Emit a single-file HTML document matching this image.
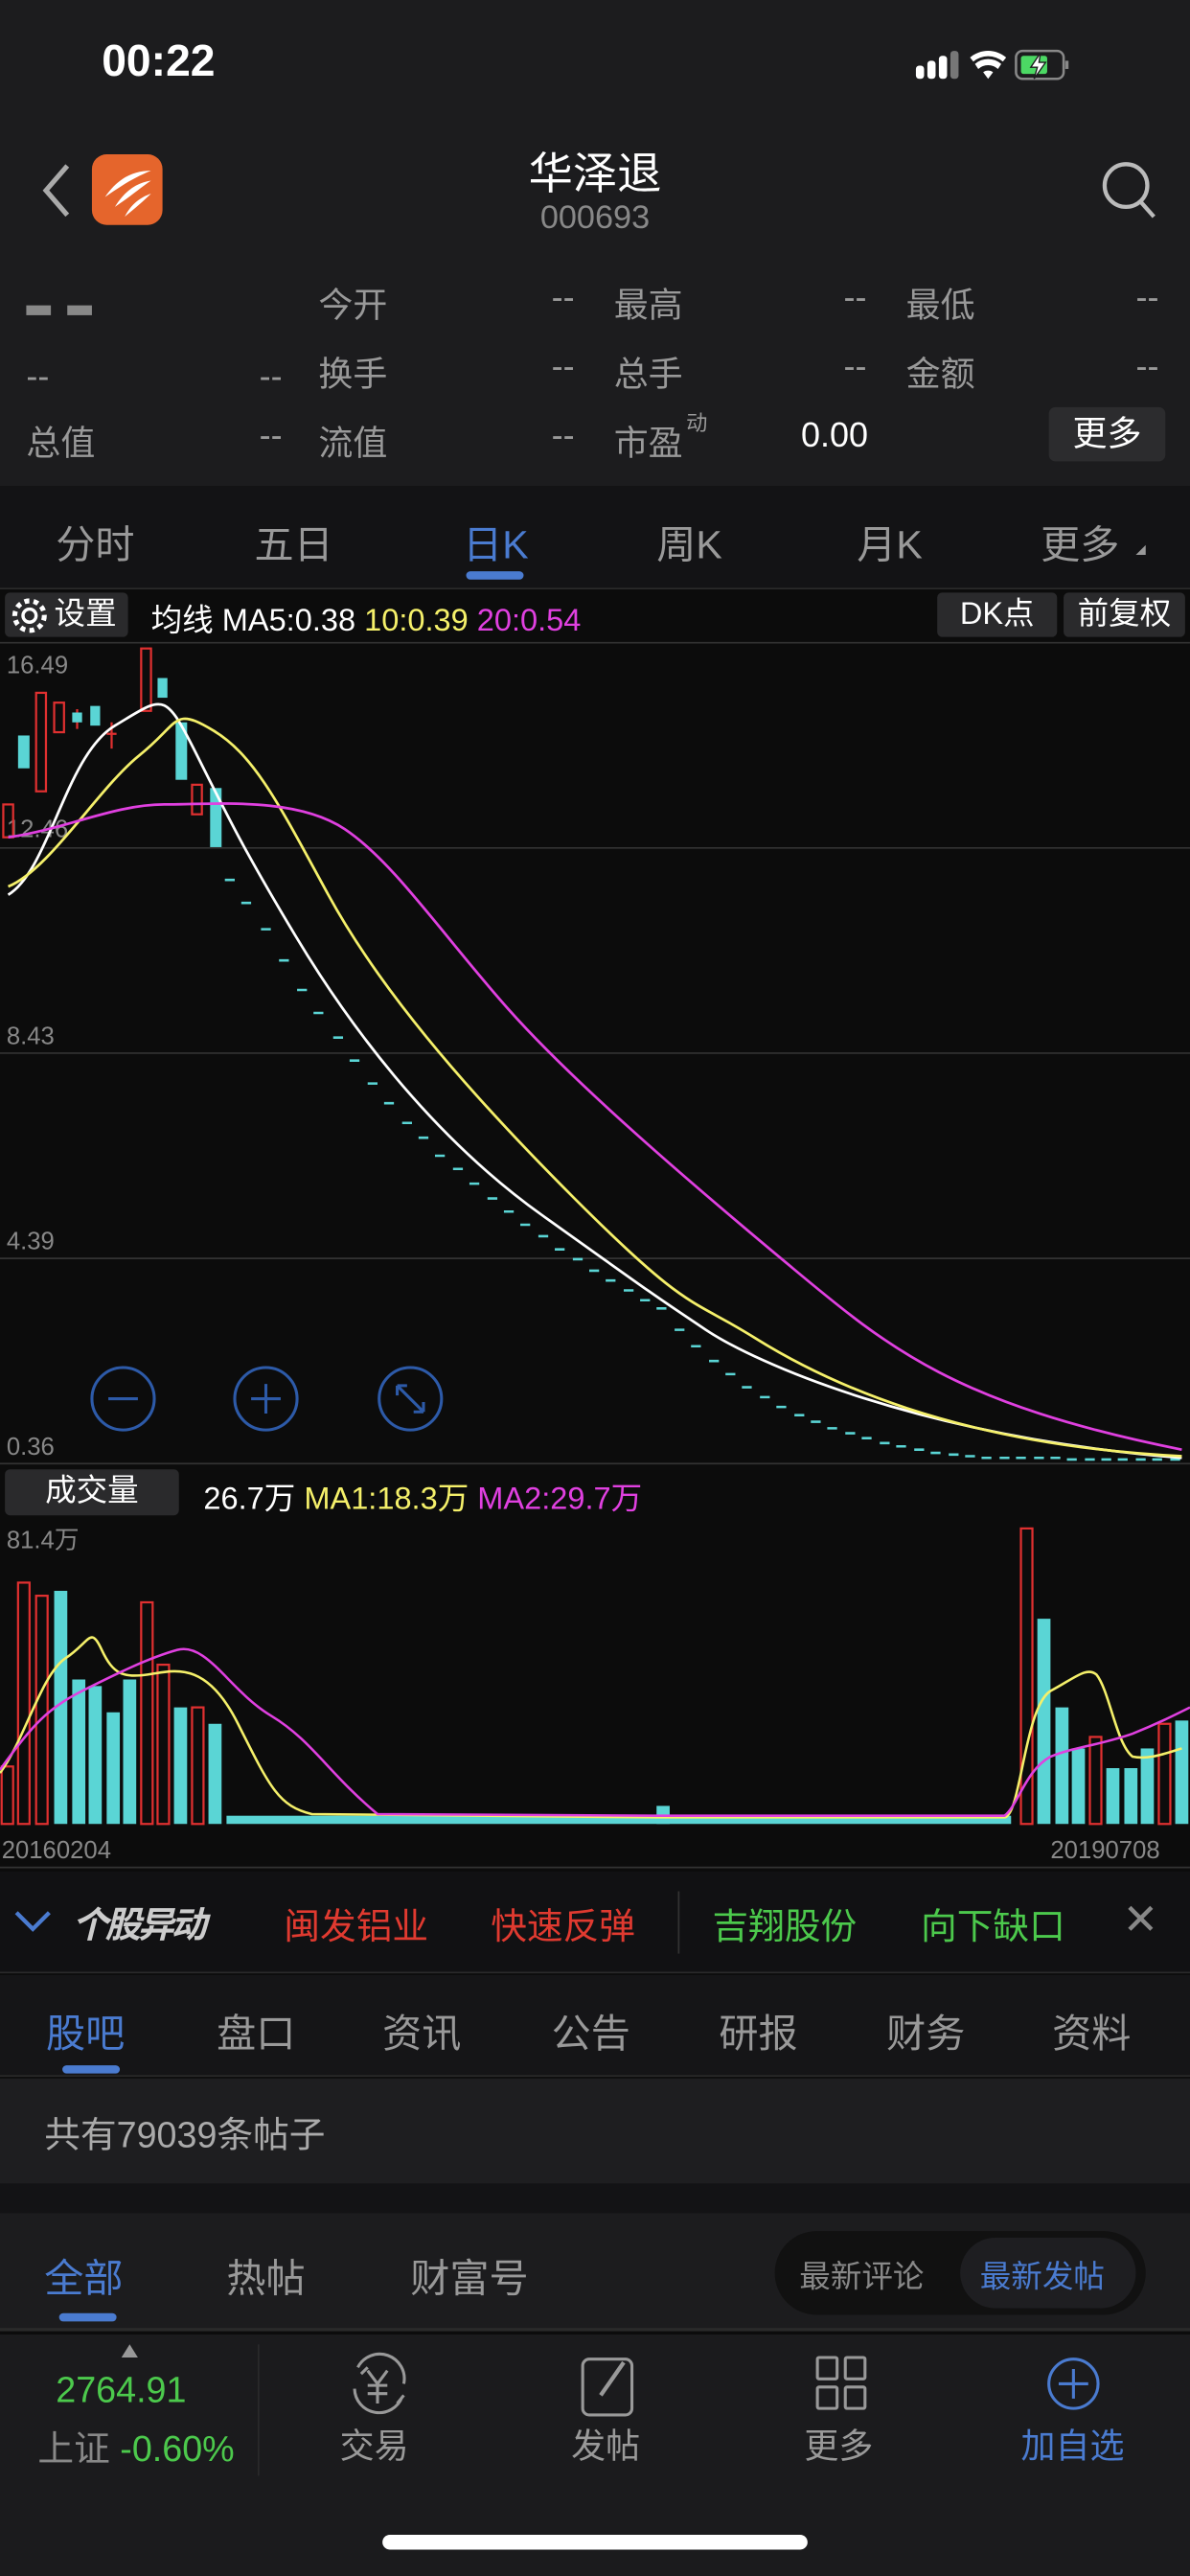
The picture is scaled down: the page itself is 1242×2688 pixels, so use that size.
<!DOCTYPE html>
<html><head><meta charset="utf-8">
<style>
*{margin:0;padding:0;box-sizing:border-box}
html,body{width:1242px;height:2688px;overflow:hidden;background:#1b1b1d}
#w{width:725px;height:1569px;transform:scale(1.71310);transform-origin:0 0;position:relative;font-family:"Liberation Sans","Noto Sans CJK SC",sans-serif;color:#999}
.a{position:absolute;white-space:nowrap}
</style></head><body><div id="w">
<div class="a" style="left:0;top:0;width:725px;height:296px;background:#1c1c1e"></div>
<div class="a" style="left:62px;top:22px;font-size:27px;color:#fff;font-weight:bold">00:22</div>
<svg class="a" style="left:556px;top:28px" width="135" height="24">
<g fill="#fff"><rect x="2" y="12" width="5" height="8" rx="2"/><rect x="9" y="9" width="5" height="11" rx="2"/><rect x="16" y="6" width="5" height="14" rx="2"/><rect x="23" y="3" width="5" height="17" rx="2" fill="#777"/>
<path d="M46 20l-3-4a5 5 0 0 1 6 0z"/><path d="M38 11a12 12 0 0 1 16 0l-2 3a9 9 0 0 0-12 0z"/><path d="M35 7a17 17 0 0 1 22 0l-2 2.5a14 14 0 0 0-18 0z"/></g>
<rect x="63" y="3" width="29" height="17" rx="4" fill="none" stroke="#888" stroke-width="1.5"/><rect x="66" y="6" width="16" height="11" rx="1.5" fill="#4cd964"/><rect x="93" y="9" width="2" height="5" fill="#888"/><path d="M78 4l-6 9h4l-2 7 7-10h-4z" fill="#fff" stroke="#1c1c1e" stroke-width=".8"/></svg>
<svg class="a" style="left:22px;top:98px" width="24" height="36"><path d="M19 3L6 18l13 15" stroke="#aaa" stroke-width="3" fill="none"/></svg>
<div class="a" style="left:56px;top:94px;width:43px;height:43px;border-radius:9px;background:#e5652c"></div>
<svg class="a" style="left:56px;top:94px" width="43" height="43"><g fill="#fff"><path d="M8 26c8-12 18-16 28-16-10 4-18 9-28 16z"/><path d="M14 32c6-10 14-15 22-16-6 4-13 10-22 16z"/><path d="M20 38c4-8 10-12 16-14-4 4-10 9-16 14z"/></g></svg>
<div class="a" style="left:0;width:725px;top:84px;text-align:center;font-size:27px;color:#fff">华泽退</div>
<div class="a" style="left:0;width:725px;top:122px;text-align:center;font-size:20px;color:#888">000693</div>
<svg class="a" style="left:668px;top:96px" width="40" height="40"><circle cx="18" cy="17" r="13" stroke="#bbb" stroke-width="2.5" fill="none"/><path d="M27 27l8 9" stroke="#bbb" stroke-width="2.5"/></svg>
<div class="a" style="left:16px;top:186px;width:40px;height:6px;border-left:15px solid #888;border-right:15px solid #888"></div>
<div style="font-size:21px">
<div class="a" style="left:194px;top:170px">今开</div><div class="a" style="left:336px;top:170px">--</div>
<div class="a" style="left:374px;top:170px">最高</div><div class="a" style="left:514px;top:170px">--</div>
<div class="a" style="left:552px;top:170px">最低</div><div class="a" style="left:692px;top:170px">--</div>
<div class="a" style="left:16px;top:218px">--</div><div class="a" style="left:158px;top:218px">--</div>
<div class="a" style="left:194px;top:212px">换手</div><div class="a" style="left:336px;top:212px">--</div>
<div class="a" style="left:374px;top:212px">总手</div><div class="a" style="left:514px;top:212px">--</div>
<div class="a" style="left:552px;top:212px">金额</div><div class="a" style="left:692px;top:212px">--</div>
<div class="a" style="left:16px;top:254px">总值</div><div class="a" style="left:158px;top:254px">--</div>
<div class="a" style="left:194px;top:254px">流值</div><div class="a" style="left:336px;top:254px">--</div>
<div class="a" style="left:374px;top:254px">市盈</div><div class="a" style="left:418px;top:247px;font-size:13px">动</div>
<div class="a" style="left:488px;top:254px;color:#fff">0.00</div>
<div class="a" style="left:639px;top:248px;width:71px;height:33px;background:#2c2c2e;border-radius:4px;color:#fff;text-align:center;line-height:33px">更多</div>
</div>
<div class="a" style="left:0;top:296px;width:725px;height:62px;background:#131315;font-size:24px">
<div class="a" style="left:34px;top:16px">分时</div><div class="a" style="left:155px;top:16px">五日</div>
<div class="a" style="left:282px;top:16px;color:#4a7bd0">日K</div><div class="a" style="left:400px;top:16px">周K</div>
<div class="a" style="left:522px;top:16px">月K</div><div class="a" style="left:634px;top:16px">更多</div>
<div class="a" style="left:692px;top:36px;border-left:6px solid transparent;border-bottom:6px solid #999"></div>
<div class="a" style="left:284px;top:52px;width:35px;height:5px;border-radius:3px;background:#4a7bd0"></div></div>
<div class="a" style="left:0;top:358px;width:725px;height:1140px;background:#0c0c0c;border-top:1px solid #2a2a2a"></div>
<div class="a" style="left:3px;top:361px;width:75px;height:27px;background:#2a2a2c;border-radius:3px;color:#fff;font-size:19px;line-height:27px;padding-left:30px">设置</div>
<svg class="a" style="left:6px;top:363px" width="24" height="24"><circle cx="12" cy="12" r="4" fill="none" stroke="#fff" stroke-width="2"/><circle cx="12" cy="12" r="9" fill="none" stroke="#fff" stroke-width="3" stroke-dasharray="3 2.6"/></svg>
<div class="a" style="left:92px;top:363px;font-size:19px;color:#fff">均线 MA5:0.38 <span style="color:#f5f06a">10:0.39</span> <span style="color:#e040e0">20:0.54</span></div>
<div class="a" style="left:571px;top:361px;width:73px;height:27px;background:#2a2a2c;border-radius:3px;color:#fff;font-size:19px;line-height:27px;text-align:center">DK点</div>
<div class="a" style="left:648px;top:361px;width:74px;height:27px;background:#2a2a2c;border-radius:3px;color:#fff;font-size:19px;line-height:27px;text-align:center">前复权</div>
<svg class="a" style="left:0;top:0" width="725" height="1140">
<g stroke="#333" stroke-width="1"><path d="M0 391.5H725M0 516.5H725M0 641.5H725M0 766.5H725M0 891.5H725M0 1137.5H725"/></g>
<g fill="#888" font-size="15" font-family="Liberation Sans"><text x="4" y="410">16.49</text><text x="4" y="510">12.46</text><text x="4" y="636">8.43</text><text x="4" y="761">4.39</text><text x="4" y="886">0.36</text><text x="4" y="943">81.4万</text><text x="1" y="1132">20160204</text><text x="640" y="1132">20190708</text></g>
<g stroke="#e03030" fill="none" stroke-width="1.3"><rect x="2" y="490" width="6" height="20"/><rect x="22" y="422" width="6" height="60"/><rect x="33" y="428" width="6" height="18"/><rect x="86" y="395" width="6" height="38"/><rect x="117" y="478" width="6" height="18"/><path d="M68 440v16M47 432v12M65 447h6"/></g>
<g fill="#5ad5d5"><rect x="11" y="448" width="7" height="20"/><rect x="44" y="434" width="6" height="6"/><rect x="55" y="430" width="6" height="12"/><rect x="96" y="413" width="6" height="12"/><rect x="107" y="440" width="7" height="35"/><rect x="128" y="480" width="7" height="36"/>
<path d="M137 536h6M147 550h6M159 566h6M170 585h6M181 603h6M191 617h6M203 632h6M213 646h6M224 660h6M234 672h6M245 684h6M255 693h6M265 704h6M276 712h6M286 721h6M297 730h6M307 738h6M317 746h6M328 753h6M338 761h6M349 767h6M359 774h6M369 780h6M380 786h6M390 792h6M400 797h6M411 810h6M421 820h6M432 829h6M442 837h6M452 845h6M463 851h6M473 857h6M484 862h6M494 866h6M504 870h6M515 873h6M525 876h6M536 879h6M546 881h6M557 883h6M567 885h6M578 886h6M588 887h6M598 888h6M609 888h6M619 888h6M630 888h6M640 888h6M650 889h6M661 889h6M671 889h6M681 889h6M692 889h6M702 889h6M713 889h6" stroke="#5ad5d5" stroke-width="1.5"/></g>
<path d="M5 545C30 530 40 460 70 442S100 420 120 460 150 520 180 570 260 690 330 740 400 790 430 810 560 875 720 888" stroke="#fff" stroke-width="1.6" fill="none"/>
<path d="M5 540C30 530 60 480 85 460S105 430 130 445 170 490 200 545 280 660 350 730 420 790 460 815 580 880 720 887" stroke="#f5f06a" stroke-width="1.6" fill="none"/>
<path d="M5 510C40 505 70 490 100 490S180 485 210 505 270 570 310 615 420 720 480 770 580 855 720 883" stroke="#e040e0" stroke-width="1.6" fill="none"/>
<g stroke="#2d5aa8" stroke-width="1.8" fill="none"><circle cx="75" cy="852" r="19"/><path d="M66 852h18"/><circle cx="162" cy="852" r="19"/><path d="M153 852h18M162 843v18"/><circle cx="250" cy="852" r="19"/><path d="M242 844l16 16M242 844v6M242 844h6M258 860v-6M258 860h-6"/></g>
<g stroke="#e03030" fill="none" stroke-width="1.3"><rect x="1" y="1076" width="7" height="35"/><rect x="11" y="964" width="7" height="147"/><rect x="22" y="972" width="7" height="139"/><rect x="86" y="976" width="7" height="135"/><rect x="117" y="1040" width="7" height="71"/><rect x="96" y="1014" width="7" height="97"/><rect x="622" y="931" width="7" height="180"/><rect x="664" y="1058" width="7" height="53"/><rect x="706" y="1050" width="7" height="61"/></g>
<g fill="#5ad5d5"><rect x="33" y="969" width="8" height="142"/><rect x="44" y="1023" width="8" height="88"/><rect x="54" y="1027" width="8" height="84"/><rect x="65" y="1043" width="8" height="68"/><rect x="75" y="1023" width="8" height="88"/><rect x="106" y="1040" width="8" height="71"/><rect x="127" y="1050" width="8" height="61"/><rect x="632" y="986" width="8" height="125"/><rect x="643" y="1040" width="8" height="71"/><rect x="653" y="1065" width="8" height="46"/><rect x="674" y="1077" width="8" height="34"/><rect x="685" y="1077" width="8" height="34"/><rect x="695" y="1065" width="8" height="46"/><rect x="716" y="1048" width="8" height="63"/>
<rect x="138" y="1106" width="478" height="5"/><rect x="400" y="1100" width="8" height="11"/></g>
<path d="M0 1080C15 1060 25 1020 40 1010S55 990 62 1005 75 1022 90 1020 125 1010 145 1050 170 1100 190 1105L400 1107L612 1107C622 1106 624 1040 640 1030C655 1022 662 1015 668 1020C676 1030 680 1062 690 1070C700 1072 710 1068 720 1065" stroke="#f5f06a" stroke-width="1.5" fill="none"/>
<path d="M0 1078C20 1050 30 1040 50 1030S90 1010 108 1005 140 1030 165 1045 200 1080 230 1105L400 1106L612 1106C620 1100 625 1078 640 1070C655 1064 670 1063 690 1056C705 1050 715 1045 725 1040" stroke="#e040e0" stroke-width="1.5" fill="none"/>
</svg>
<div class="a" style="left:3px;top:895px;width:106px;height:28px;background:#2a2a2c;border-radius:3px;color:#fff;font-size:19px;line-height:28px;text-align:center">成交量</div>
<div class="a" style="left:124px;top:898px;font-size:19px;color:#fff">26.7万 <span style="color:#f5f06a">MA1:18.3万</span> <span style="color:#e040e0">MA2:29.7万</span></div>
<div class="a" style="left:0;top:1140px;width:725px;height:62px;background:#111113;border-bottom:1px solid #2a2a2a;font-size:22px">
<svg class="a" style="left:8px;top:22px" width="24" height="16"><path d="M2 3l10 10 10-10" stroke="#4a7bd0" stroke-width="2.5" fill="none"/></svg>
<div class="a" style="left:44px;top:15px;color:#ccc;font-weight:bold;font-style:italic;letter-spacing:-2px">个股异动</div>
<div class="a" style="left:173px;top:16px;color:#e03a30">闽发铝业</div><div class="a" style="left:299px;top:16px;color:#e03a30">快速反弹</div>
<div class="a" style="left:413px;top:12px;width:1px;height:38px;background:#333"></div>
<div class="a" style="left:434px;top:16px;color:#4cc94c">吉翔股份</div><div class="a" style="left:561px;top:16px;color:#4cc94c">向下缺口</div>
<div class="a" style="left:684px;top:14px;color:#888;font-size:26px">✕</div></div>
<div class="a" style="left:0;top:1203px;width:725px;height:62px;background:#151517;font-size:24px;border-bottom:1px solid #2a2a2a">
<div class="a" style="left:28px;top:16px;color:#4a7bd0">股吧</div><div class="a" style="left:132px;top:16px">盘口</div><div class="a" style="left:233px;top:16px">资讯</div><div class="a" style="left:336px;top:16px">公告</div><div class="a" style="left:438px;top:16px">研报</div><div class="a" style="left:540px;top:16px">财务</div><div class="a" style="left:641px;top:16px">资料</div>
<div class="a" style="left:38px;top:55px;width:35px;height:5px;border-radius:3px;background:#4a7bd0"></div></div>
<div class="a" style="left:0;top:1266px;width:725px;height:64px;background:#1e1e20;font-size:22px;color:#aaa;padding:17px 0 0 27px">共有79039条帖子</div>
<div class="a" style="left:0;top:1330px;width:725px;height:18px;background:#131315"></div>
<div class="a" style="left:0;top:1348px;width:725px;height:72px;background:#1c1c1e;font-size:24px;border-bottom:2px solid #2a2a2a">
<div class="a" style="left:27px;top:20px;color:#4a7bd0">全部</div><div class="a" style="left:138px;top:20px">热帖</div><div class="a" style="left:250px;top:20px">财富号</div>
<div class="a" style="left:36px;top:61px;width:35px;height:5px;border-radius:3px;background:#4a7bd0"></div>
<div class="a" style="left:472px;top:11px;width:226px;height:51px;border-radius:26px;background:#111;font-size:19px">
<div class="a" style="left:15px;top:13px;color:#888">最新评论</div>
<div class="a" style="left:113px;top:4px;width:107px;height:43px;border-radius:22px;background:#1e1e21;color:#4a7bd0;padding:9px 0 0 12px">最新发帖</div></div></div>
<div class="a" style="left:0;top:1422px;width:725px;height:147px;background:#1b1b1d">
<div class="a" style="left:74px;top:6px;border:5px solid transparent;border-bottom:8px solid #999;border-top:0"></div>
<div class="a" style="left:34px;top:21px;font-size:22px;color:#4cc94c">2764.91</div>
<div class="a" style="left:23px;top:52px;font-size:22px;color:#888">上证 <span style="color:#4cc94c">-0.60%</span></div>
<div class="a" style="left:157px;top:6px;width:1px;height:80px;background:#2a2a2a"></div>
<svg class="a" style="left:0;top:0" width="725" height="60" fill="none" stroke="#999" stroke-width="1.8">
<path d="M218 20a15 15 0 0 1 28 10M245 38a15 15 0 0 1-29-5M224 20l-4 4M242 42l4-5"/><path d="M224 22l6 8 6-8M230 30v12M224 31h12M224 36h12"/>
<rect x="355" y="15" width="30" height="34" rx="4"/><path d="M366 37l14-20" stroke-width="2.5"/>
<rect x="498" y="14" width="12" height="13" rx="1"/><rect x="515" y="14" width="12" height="13" rx="1"/><rect x="498" y="32" width="12" height="13" rx="1"/><rect x="515" y="32" width="12" height="13" rx="1"/>
<g stroke="#4a7bd0"><circle cx="654" cy="30" r="15"/><path d="M654 21v18M645 30h18"/></g></svg>
<div class="a" style="left:207px;top:52px;font-size:21px">交易</div><div class="a" style="left:348px;top:52px;font-size:21px">发帖</div><div class="a" style="left:490px;top:52px;font-size:21px">更多</div><div class="a" style="left:622px;top:52px;font-size:21px;color:#4a7bd0">加自选</div>
<div class="a" style="left:233px;top:122px;width:259px;height:9px;border-radius:5px;background:#fff"></div></div>
</div></body></html>
